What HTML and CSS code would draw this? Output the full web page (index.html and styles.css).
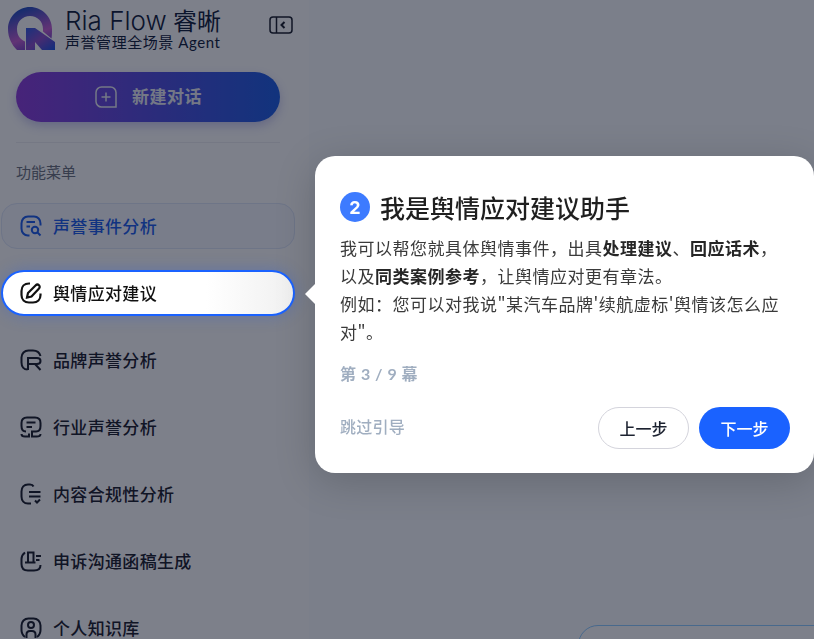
FILE: index.html
```html
<!DOCTYPE html>
<html lang="zh-CN">
<head>
<meta charset="utf-8">
<title>Ria Flow 睿晰</title>
<link rel="stylesheet" href="styles.css">
</head>
<body>
<div class="app">
  <aside class="sidebar">
    <header class="brand">
      <svg class="logo" viewBox="0 0 48 48" width="48" height="48">
        <defs>
          <linearGradient id="lg" x1="0.3" y1="0" x2="0.7" y2="1">
            <stop offset="0" stop-color="#1a4fc0"/><stop offset="0.65" stop-color="#c060d0"/><stop offset="1" stop-color="#5a3ec0"/>
          </linearGradient>
          <linearGradient id="lg2" x1="0" y1="0" x2="1" y2="1">
            <stop offset="0" stop-color="#2f5ce0"/><stop offset="0.5" stop-color="#8a4fc8"/><stop offset="1" stop-color="#1a55e0"/>
          </linearGradient>
        </defs>
        <path d="M17 43V34.500C11.500 32 9 27.500 9 22C9 14.500 14.500 9 22 9C29.500 9 35 14.500 35 22V24.500L43.500 31.500C44 28.500 44 25 44 22C44 10 34 0 22 0C10 0 0 10 0 22C0 31 4 38 9 43Z" fill="url(#lg)"/>
        <path d="M18 21H27L47 35V43H34L27 35V43H18Z" fill="url(#lg2)"/>
      </svg>
      <div class="brand-text">
        <div class="brand-name">Ria Flow <span class="brand-cn">睿晰</span></div>
        <div class="brand-sub">声誉管理全场景 Agent</div>
      </div>
      <svg class="collapse" viewBox="0 0 24 20" width="24" height="20" fill="none" stroke="#1c2230" stroke-width="1.500">
        <rect x="1" y="2" width="22" height="16" rx="3"/><path d="M7.500 2V18"/><path d="M15.500 7L12.500 10L15.500 13" stroke-width="2"/>
      </svg>
    </header>

    <button class="new-chat">
      <svg viewBox="0 0 22 22" width="22" height="22" fill="none" stroke="currentColor" stroke-width="1.500">
        <path d="M6.500 1H15.500C18.500 1 21 3.500 21 6.500V21H6.500C3.500 21 1 18.500 1 15.500V6.500C1 3.500 3.500 1 6.500 1Z"/><path d="M11 6.500V15.500M6.500 11H15.500"/>
      </svg>
      <span class="new-label">新建对话</span>
    </button>

    <div class="divider"></div>
    <div class="section">功能菜单</div>

    <nav class="menu">
      <a class="item selected">
        <svg viewBox="0 0 22 22" fill="none" stroke="currentColor" stroke-width="2"><path d="M9.500 20.500H8C4.200 20.500 1.500 17.500 1.500 13.500V8.500C1.500 4.500 4.200 1.500 8 1.500H14C17.800 1.500 20.500 4.500 20.500 8.500V10.500"/><path d="M6.500 7H15M6.500 11.500H10"/><circle cx="15" cy="15" r="3.200"/><path d="M17.500 17.500L20.500 20.500"/></svg>
        <span>声誉事件分析</span>
      </a>
      <a class="item spotlight">
        <svg viewBox="0 0 22 22" fill="none" stroke="currentColor" stroke-width="2.200"><path d="M10 1.500H9C4.500 1.500 1.500 4.500 1.500 9V13C1.500 17.500 4.500 20.500 9 20.500H13C17.500 20.500 20.500 17.500 20.500 13V11.500"/><path d="M7 15.500L8 11L15.500 3.500C16.700 2.300 18 2.300 19 3.200C20 4.200 20 5.500 18.800 6.700L11.500 14.500Z"/></svg>
        <span>舆情应对建议</span>
      </a>
      <a class="item">
        <svg viewBox="0 0 22 22" fill="none" stroke="currentColor" stroke-width="2"><path d="M7.500 20.500C3.800 20.500 1.500 17.500 1.500 13.500V8.500C1.500 4.500 4.500 1.500 8.500 1.500H13C17 1.500 19.500 3.500 20.500 7"/><path d="M8 21V9H17C19 9 20.500 10.200 20.500 12C20.500 13.800 19 15 17 15H8M15 15L20.500 21"/></svg>
        <span>品牌声誉分析</span>
      </a>
      <a class="item">
        <svg viewBox="0 0 22 22" fill="none" stroke="currentColor" stroke-width="2"><path d="M6 15.500C3.500 15.500 1.500 13.500 1.500 10V7C1.500 3.500 3.500 1.500 7 1.500H15C18.500 1.500 20.500 3.500 20.500 7V10C20.500 13.500 18.500 15.500 16 15.500H12V20.500H16.500C18.800 20.500 20.500 20 20.500 18"/><path d="M1.500 18C1.500 20 3 20.500 5 20.500H9V17.500"/><path d="M6.500 6.500H15.500M6.500 11H12"/></svg>
        <span>行业声誉分析</span>
      </a>
      <a class="item">
        <svg viewBox="0 0 22 22" fill="none" stroke="currentColor" stroke-width="2"><path d="M13.500 3.500C13 2.300 12 1.500 10 1.500H8C4 1.500 1.500 4.500 1.500 8.500V13.500C1.500 17.500 4 20.500 8 20.500H11"/><path d="M9 9H20.500M9 13.500H20.500" stroke-width="1.800"/><path d="M15 17.500L17 19.500L20 16.500"/></svg>
        <span>内容合规性分析</span>
      </a>
      <a class="item">
        <svg viewBox="0 0 22 22" fill="none" stroke="currentColor" stroke-width="2"><path d="M5 2.500C3 4 1.500 6 1.500 9V14C1.500 18 4 20.500 8 20.500H14C18 20.500 20.500 18.500 20.500 15"/><path d="M8 12.500V2.500H13.500V12.500M5 12.500H15.500M16 6H21M16 10H19.500"/></svg>
        <span>申诉沟通函稿生成</span>
      </a>
      <a class="item">
        <svg viewBox="0 0 22 22" fill="none" stroke="currentColor" stroke-width="2"><path d="M5 20C3 18.500 1.500 16.500 1.500 13V8.500C1.500 4.500 4.500 1.500 8.500 1.500H13.500C17.500 1.500 20.500 4.500 20.500 8.500V13C20.500 16.500 19 18.500 17 20"/><circle cx="11" cy="8" r="3"/><path d="M6.500 21V17.500C6.500 15.500 8 14 10 14H12C14 14 15.500 15.500 15.500 17.500V21"/></svg>
        <span>个人知识库</span>
      </a>
    </nav>
  </aside>

  <main class="main">
    <div class="input-box"></div>
  </main>
</div>

<div class="overlay"></div>

<section class="popover">
  <h2 class="pop-title"><span class="num">2</span>我是舆情应对建议助手</h2>
  <p class="pop-body">我可以帮您就具体舆情事件，出具<b>处理建议</b>、<b>回应话术</b>，以及<b>同类案例参考</b>，让舆情应对更有章法。<br>例如：您可以对我说"某汽车品牌'续航虚标'舆情该怎么应对"。</p>
  <div class="pop-step">第 3 / 9 幕</div>
  <footer class="pop-foot">
    <a class="skip">跳过引导</a>
    <div class="actions">
      <button class="btn prev">上一步</button>
      <button class="btn next">下一步</button>
    </div>
  </footer>
</section>
</body>
</html>
```

FILE: styles.css
```css
* { box-sizing: border-box; }
html, body { margin: 0; height: 100%; overflow: hidden; }
body {
  font-family: "Noto Sans CJK SC", "Noto Sans", sans-serif;
  background: #f3f6fa;
  color: #1c2230;
}
.app { display: flex; height: 639px; overflow: hidden; }
.sidebar {
  width: 309px;
  flex: none;
  padding: 4px 16px 0;
  background: #f6f8fb;
  overflow: hidden;
}
.brand { display: flex; align-items: flex-start; height: 68px; margin-left: -8px; }
.logo { flex: none; margin-top: 3px; }
.brand-text { margin-left: 9px; margin-top: 2px; color: #13233f; width: 205px; }
.brand-name { font-family: "Inter", "Noto Sans CJK SC", sans-serif; font-size: 26px; line-height: 28px; height: 27px; font-weight: 300; white-space: nowrap; }
.brand-cn { font-family: "Noto Sans CJK SC", sans-serif; font-size: 24px; font-weight: 400; margin-left: -1px; }
.brand-sub { font-size: 15px; line-height: 18px; letter-spacing: .55px; white-space: nowrap; font-family: "Lato", "Noto Sans CJK SC", sans-serif; }
.collapse { margin-top: 11px; flex: none; }
.new-chat {
  display: flex; align-items: center; justify-content: center; gap: 15px;
  width: 264px; height: 50px; border: 0; border-radius: 25px; padding: 0 0 0 1px;
  background: linear-gradient(90deg, #8b3fd9, #1f5fe0);
  color: #e4e8f2; font: 700 17px "Noto Sans CJK SC", sans-serif;
  letter-spacing: .5px;
  box-shadow: 0 4px 10px rgba(60, 60, 200, .25);
}
.new-label { padding-bottom: 3px; }
.divider { height: 1px; width: 264px; background: #e6e9ef; margin-top: 20px; }
.section { margin-top: 19px; font-size: 15px; line-height: 20px; color: #6b7280; }
.menu { display: flex; flex-direction: column; gap: 21px; margin: 21px 0 0 -15px; width: 294px; }
.item {
  display: flex; align-items: center; gap: 11px;
  height: 46px; padding: 0 18px; border-radius: 16px;
  border: 1px solid transparent;
  font-size: 17px; font-weight: 500; letter-spacing: .33px; color: #1c2230;
}
.item svg { width: 22px; height: 22px; flex: none; }
.item span { white-space: nowrap; padding-bottom: 2px; }
.selected { color: #1f5fe8; background: #eef2fb; border-color: #d8e2f5; }
.spotlight {
  position: relative; z-index: 20;
  background: linear-gradient(90deg, #fff 70%, #f0f0f0);
  border: 2px solid #1a62ff;
  border-radius: 23px; padding: 0 17px;
  color: #111;
  box-shadow: 0 0 16px rgba(40, 90, 230, .3);
}
.main { flex: 1; position: relative; }
.input-box {
  position: absolute; left: 269px; top: 625px; width: 400px; height: 120px;
  border: 1px solid #8ccaff; border-radius: 20px; background: #f6f8fb;
}
.overlay {
  position: fixed; inset: 0; z-index: 10;
  background: rgba(3, 8, 26, .5);
}
.popover {
  position: absolute; left: 315px; top: 156px; z-index: 20;
  width: 499px; height: 317px; padding: 34px 24px 0 25px;
  background: #fff; border-radius: 20px;
  box-shadow: 0 8px 40px rgba(0, 0, 0, .18);
}
.popover::before {
  content: ""; position: absolute; left: -10px; top: 128px;
  width: 20px; height: 20px; background: #fff;
  clip-path: polygon(50% 0, 100% 50%, 50% 100%, 0 50%);
}
.pop-title {
  display: flex; align-items: center; gap: 10px;
  margin: 0; height: 34px;
  font-size: 25px; font-weight: 500; line-height: 34px; color: #1f1f1f;
}
.num {
  width: 30px; height: 30px; border-radius: 50%;
  background: #3d7bff; color: #fff;
  display: flex; align-items: center; justify-content: center;
  font: 700 18px "Inter", sans-serif; letter-spacing: 0;
}
.pop-body {
  margin: 10px 0 0; font-size: 17px; line-height: 28px; letter-spacing: .5px; color: #3a3a3a;
}
.pop-body b { font-weight: 700; color: #262626; }
.pop-step {
  margin-top: 16px; height: 24px;
  font: 700 16px/24px "Lato", "Noto Sans CJK SC", sans-serif; letter-spacing: .5px; color: #a0aec0;
}
.pop-foot { display: flex; justify-content: space-between; margin-top: 21px; height: 42px; }
.skip { font-size: 16px; font-weight: 500; color: #a0aec0; line-height: 38px; letter-spacing: .25px; }
.actions { display: flex; gap: 10px; }
.btn {
  width: 91px; height: 42px; border-radius: 21px;
  font: 500 16px "Noto Sans CJK SC", sans-serif; cursor: pointer;
}
.prev { background: #fff; border: 1px solid #d4d4dc; color: #1c2230; }
.next { background: #1a62ff; border: 0; color: #fff; }
```
